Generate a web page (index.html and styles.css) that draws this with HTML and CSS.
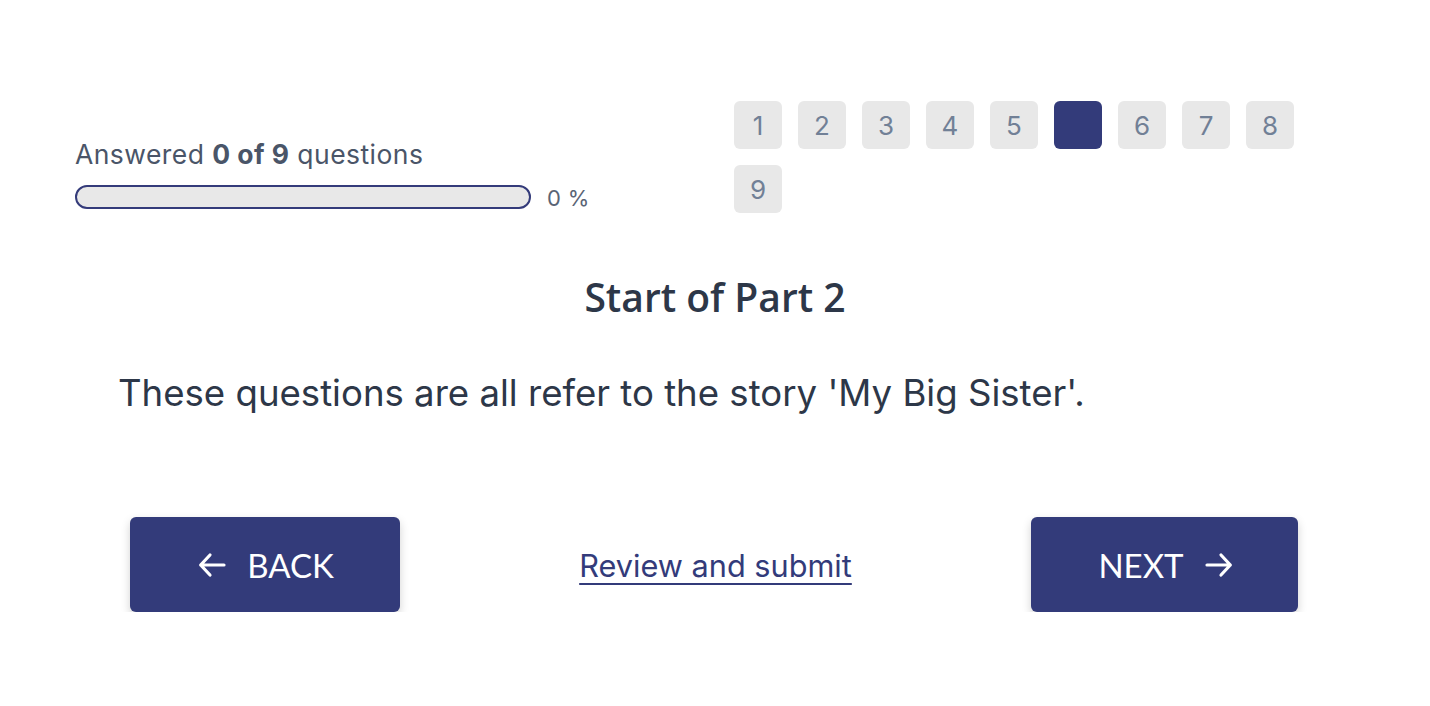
FILE: index.html
```html
<!DOCTYPE html>
<html lang="en">
<head>
<meta charset="utf-8">
<title>Quiz</title>
<link rel="stylesheet" href="styles.css">
</head>
<body>
<main class="container">
  <section class="top">
    <div class="progress">
      <p class="answered">Answered <strong>0 of 9</strong> questions</p>
      <div class="bar-row">
        <div class="bar"><div class="fill" style="width:0%"></div></div>
        <span class="pct">0 %</span>
      </div>
    </div>
    <nav class="pages">
      <span class="page">1</span>
      <span class="page">2</span>
      <span class="page">3</span>
      <span class="page">4</span>
      <span class="page">5</span>
      <span class="page current"></span>
      <span class="page">6</span>
      <span class="page">7</span>
      <span class="page">8</span>
      <span class="page">9</span>
    </nav>
  </section>

  <h1 class="title">Start of Part 2</h1>
  <p class="intro">These questions are all refer to the story 'My Big Sister'.</p>

  <div class="actions">
    <button class="btn back" type="button">
      <svg class="arrow" viewBox="0 0 24 24" width="32" height="32" fill="none" stroke="currentColor" stroke-width="2.4" stroke-linecap="round" stroke-linejoin="round"><path d="M21 12H3.5M10.5 4.5L3.5 12l7 7.5"/></svg>
      <span>BACK</span>
    </button>
    <a class="review" href="#">Review and submit</a>
    <button class="btn next" type="button">
      <span>NEXT</span>
      <svg class="arrow" viewBox="0 0 24 24" width="32" height="32" fill="none" stroke="currentColor" stroke-width="2.4" stroke-linecap="round" stroke-linejoin="round"><path d="M3 12h17.5M13.5 4.5l7 7.5-7 7.5"/></svg>
    </button>
  </div>
</main>
</body>
</html>
```

FILE: styles.css
```css
* { box-sizing: border-box; }
html, body { margin: 0; padding: 0; background: #fff; }
body {
  font-family: Inter, "Noto Sans", "Liberation Sans", sans-serif;
  color: #2d3748;
}
.container {
  width: 1280px;
  margin: 0 auto;
  padding-top: 101px;
}
.top {
  display: flex;
  align-items: flex-end;
}
.progress {
  width: 659px;
  padding-bottom: 3px;
}
.answered {
  margin: 0 0 14px;
  font-size: 26.5px;
  letter-spacing: 0.45px;
  line-height: 32px;
  color: #4a5568;
}
.answered strong { font-weight: 700; }
.bar-row {
  display: flex;
  align-items: center;
  gap: 16px;
}
.bar {
  width: 456px;
  height: 24px;
  border: 2px solid #343b7a;
  border-radius: 12px;
  background: #e8e8e8;
  overflow: hidden;
}
.fill { height: 100%; background: #343b7a; }
.pct {
  font-size: 22px;
  letter-spacing: 0.4px;
  color: #5a6475;
  line-height: 24px;
  padding-top: 2px;
}
.pages {
  display: flex;
  flex-wrap: wrap;
  gap: 16px;
  width: 600px;
}
.page {
  width: 48px;
  height: 48px;
  border-radius: 6px;
  background: #e8e8e8;
  color: #718096;
  font-size: 26px;
  display: flex;
  align-items: center;
  justify-content: center;
}
.page.current { background: #333b7a; }
.title {
  margin: 60px 0 0;
  text-align: center;
  font-family: "Open Sans", Lato, sans-serif;
  font-weight: 600;
  font-size: 39px;
  line-height: 48px;
  color: #2d3748;
}
.intro {
  margin: 48px 0 0 43px;
  font-size: 36.6px;
  line-height: 48px;
  color: #2d3748;
}
.actions {
  margin-top: 100px;
  padding: 0 57px 0 55px;
  display: flex;
  align-items: center;
  justify-content: space-between;
}
.btn {
  display: flex;
  align-items: center;
  justify-content: center;
  gap: 19px;
  height: 95px;
  border: none;
  border-radius: 6px;
  background: #333b7a;
  color: #fff;
  font-family: Lato, "Noto Sans", sans-serif;
  font-size: 33px;
  box-shadow: 0 4px 10px rgba(0, 0, 0, 0.18);
  cursor: pointer;
}
.back { width: 270px; padding-left: 6px; }
.next { width: 267px; padding-right: 2px; }
.review {
  font-size: 30.7px;
  color: #333b7a;
  text-decoration: underline;
  text-underline-offset: 6px;
  text-decoration-thickness: 2px;
  margin-top: 2px;
}
```
